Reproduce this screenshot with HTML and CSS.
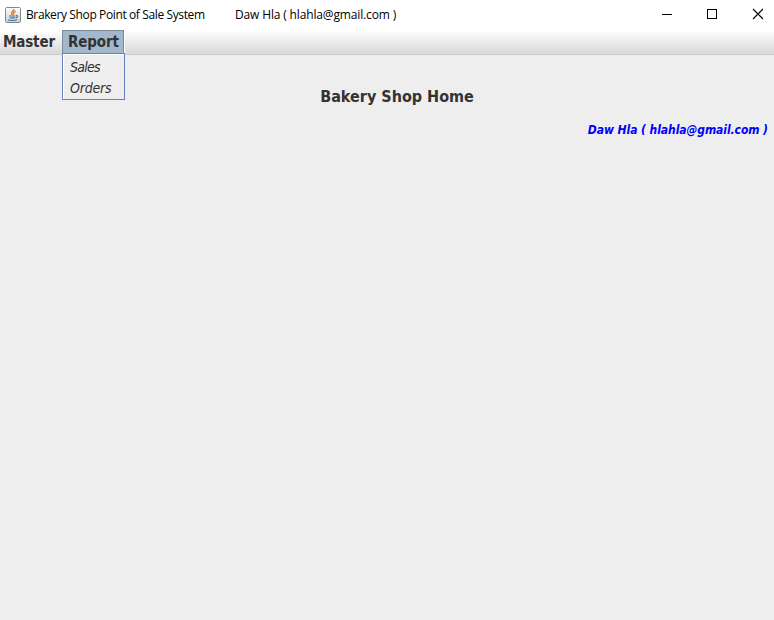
FILE: index.html
```html
<!DOCTYPE html>
<html lang="en">
<head>
<meta charset="utf-8">
<title>Brakery Shop Point of Sale System</title>
<link rel="stylesheet" href="styles.css">
</head>
<body>
<header class="titlebar">
  <svg class="app-icon" width="16" height="16" viewBox="0 0 16 16">
    <defs><linearGradient id="tile" x1="0" y1="0" x2="0" y2="1"><stop offset="0" stop-color="#fdfdfd"/><stop offset="1" stop-color="#cbd0d4"/></linearGradient></defs>
    <rect x=".5" y=".5" width="15" height="15" rx="1" fill="url(#tile)" stroke="#7e8b95"/>
    <path d="M9 2C9.2 4 5.7 4.6 6.7 6.6L7.7 8.2M10.6 4.3C8.4 5.3 8.2 6 9 7.4" fill="none" stroke="#f07a20" stroke-width="1.5"/>
    <path d="M4 9h6.5M4.8 10.9h5.2M3 12.8c2 1 7 1 9.2-.2M11 8.6c2.2-.4 2 1.6-.2 2.2" fill="none" stroke="#4d7499" stroke-width="1.1"/>
  </svg>
  <span class="app-name">Brakery Shop Point of Sale System</span>
  <span class="app-user">Daw Hla ( hlahla@gmail.com )</span>
  <div class="controls">
    <svg class="minimize" width="12" height="12" viewBox="0 0 12 12" shape-rendering="crispEdges"><path d="M1 6.5h10" stroke="#000"/></svg>
    <svg width="12" height="12" viewBox="0 0 12 12" shape-rendering="crispEdges"><rect x="1.5" y="1.5" width="9" height="9" fill="none" stroke="#000"/></svg>
    <svg width="12" height="12" viewBox="0 0 12 12"><path d="M1 1l10 10M11 1L1 11" stroke="#000" stroke-width="1.1"/></svg>
  </div>
</header>
<nav class="menubar">
  <div class="menu master"><span>Master</span></div>
  <div class="menu report"><span>Report</span>
    <div class="dropdown">
      <div class="item sales">Sales</div>
      <div class="item orders">Orders</div>
    </div>
  </div>
</nav>
<main>
  <h1><span>Bakery Shop Home</span></h1>
  <p class="account"><span>Daw Hla ( hlahla@gmail.com )</span></p>
</main>
</body>
</html>
```
FILE: styles.css
```css
* { box-sizing: border-box; }
body {
  margin: 0;
  height: 620px;
  overflow: hidden;
  background: #eee;
  color: #333;
  font-family: "DejaVu Sans Condensed", "DejaVu Sans", sans-serif;
  font-stretch: condensed;
}
.titlebar {
  display: flex;
  align-items: center;
  height: 30px;
  padding: 0 4px 0 5px;
  background: #fff;
  color: #000;
  font: 12px/16px "Open Sans", sans-serif;
  white-space: nowrap;
}
.app-icon { margin: -1px 5px 0 0; }
.app-name { width: 209px; letter-spacing: -0.38px; }
.app-user { letter-spacing: -0.15px; }
.controls { display: flex; gap: 34px; margin: -2px 0 0 auto; padding-right: 6px; }
.minimize { margin-right: -1px; }
.menubar {
  display: flex;
  height: 25px;
  background: linear-gradient(#fff, #dadada 23px);
  border-bottom: 1px solid #ccc;
  font-size: 15px;
  font-weight: bold;
  line-height: 24px;
}
.master { width: 62px; padding-left: 3px; letter-spacing: -0.15px; }
.report {
  position: relative;
  width: 62px;
  height: 24px;
  padding-left: 5px;
  line-height: 22px;
  letter-spacing: -0.15px;
  background: #a3b8cc;
  border: 1px solid #7a8a99;
  border-bottom: 0;
  box-shadow: 1px 0 #fff;
}
.dropdown {
  position: absolute;
  top: 22px;
  left: -1px;
  width: 63px;
  height: 47px;
  padding: 3px 0 0 7px;
  background: #eee;
  border: 1px solid #6382bf;
  box-shadow: inset 1px 1px #fff;
  font-size: 14px;
  font-weight: normal;
  font-style: italic;
}
.item { height: 21px; line-height: 21px; }
.sales { letter-spacing: -0.75px; }
.orders { letter-spacing: -0.2px; }
h1 {
  margin: 32px 0 0 20px;
  text-align: center;
  font-size: 16px;
  line-height: 20px;
}
.account {
  margin: 14px 6px 0 0;
  text-align: right;
  color: #00f;
  font-size: 12px;
  font-weight: bold;
  font-style: italic;
  line-height: 18px;
  letter-spacing: -0.07px;
}
```
